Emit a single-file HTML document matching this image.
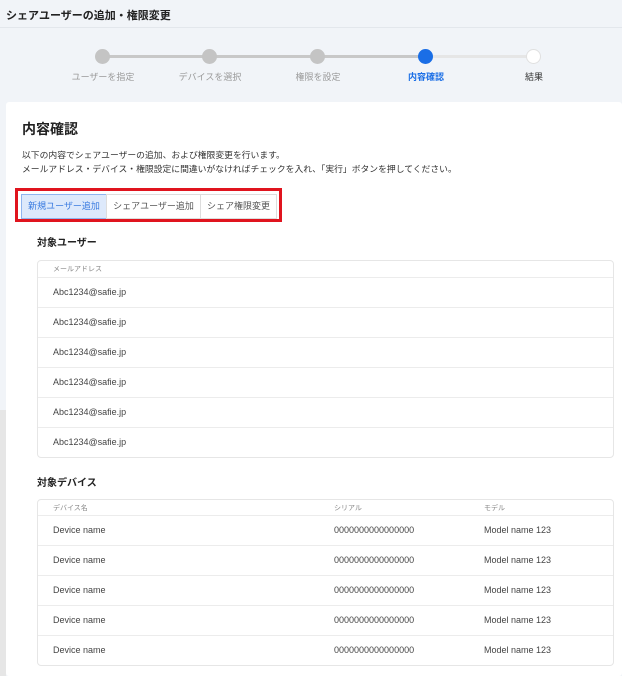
<!DOCTYPE html>
<html><head><meta charset="utf-8"><style>
*{margin:0;padding:0;box-sizing:border-box}
body{width:622px;height:676px;overflow:hidden;background:#f1f4f8;font-family:"Liberation Sans","Noto Sans CJK JP",sans-serif;color:#333;position:relative}
.hdr{position:absolute;left:0;top:0;width:622px;height:28px;border-bottom:1px solid #e3e7ec;font-size:11px;font-weight:bold;padding:7px 0 0 6px;color:#222}
.strip{position:absolute;left:0;top:410px;width:6px;height:266px;background:#e6e6e6}
.line{position:absolute;top:55px;height:3px}
.dot{position:absolute;top:49px;width:15px;height:15px;border-radius:50%}
.lbl{position:absolute;top:70px;font-size:9px;color:#999;width:100px;text-align:center}
.card{position:absolute;left:6px;top:102px;width:616px;height:574px;background:#fff;border-radius:3px}
.abs{position:absolute}
.tabs{position:absolute;left:15px;top:188px;width:267px;height:34px;border:3px solid #e0141e}
.tab{position:absolute;top:3px;height:25px;border:1px solid #ddd;font-size:9px;color:#555;text-align:center;line-height:23px;background:#fff;white-space:nowrap;overflow:hidden}
.tbl{position:absolute;left:37px;width:577px;border:1px solid #e6e6e6;border-radius:4px;font-size:9px;color:#444}
.row{position:absolute;left:0;width:575px;height:30px;border-top:1px solid #ececec}
.row span,.th span{position:absolute;top:9px}
.th{position:absolute;left:0;top:0;width:575px;height:15px;font-size:7px;color:#888}
.th span{top:3px}
</style></head><body>
<div class="hdr">シェアユーザーの追加・権限変更</div>
<div class="strip"></div>
<div class="line" style="left:103px;width:323px;background:#c8c8c8"></div>
<div class="line" style="left:426px;width:108px;background:#e6e6e6"></div>
<div class="dot" style="left:95px;background:#c4c4c4"></div>
<div class="dot" style="left:202px;background:#c4c4c4"></div>
<div class="dot" style="left:310px;background:#c4c4c4"></div>
<div class="dot" style="left:418px;background:#1a6ee6"></div>
<div class="dot" style="left:526px;background:#fff;border:1px solid #e0e0e0"></div>
<div class="lbl" style="left:53px">ユーザーを指定</div>
<div class="lbl" style="left:160px">デバイスを選択</div>
<div class="lbl" style="left:268px">権限を設定</div>
<div class="lbl" style="left:376px;color:#1a6ee6;font-weight:bold">内容確認</div>
<div class="lbl" style="left:484px;color:#333">結果</div>
<div class="card"></div>
<div class="abs" style="left:22px;top:119px;font-size:14px;font-weight:bold;color:#222">内容確認</div>
<div class="abs" style="left:22px;top:148px;font-size:8.8px;line-height:14px;color:#333;white-space:nowrap">以下の内容でシェアユーザーの追加、および権限変更を行います。<br>メールアドレス・デバイス・権限設定に間違いがなければチェックを入れ、「実行」ボタンを押してください。</div>
<div class="tabs">
<div class="tab" style="left:3px;width:86px;background:#dde9fb;border-color:#8fb5ef;color:#3a7be0">新規ユーザー追加</div>
<div class="tab" style="left:88px;width:95px">シェアユーザー追加</div>
<div class="tab" style="left:182px;width:77px">シェア権限変更</div>
</div>
<div class="abs" style="left:37px;top:234px;font-size:10px;font-weight:bold;color:#222">対象ユーザー</div>
<div class="tbl" style="top:260px;height:198px">
<div class="th"><span style="left:15px">メールアドレス</span></div>
<div class="row" style="top:16px"><span style="left:15px">Abc1234@safie.jp</span></div>
<div class="row" style="top:46px"><span style="left:15px">Abc1234@safie.jp</span></div>
<div class="row" style="top:76px"><span style="left:15px">Abc1234@safie.jp</span></div>
<div class="row" style="top:106px"><span style="left:15px">Abc1234@safie.jp</span></div>
<div class="row" style="top:136px"><span style="left:15px">Abc1234@safie.jp</span></div>
<div class="row" style="top:166px"><span style="left:15px">Abc1234@safie.jp</span></div>
</div>
<div class="abs" style="left:37px;top:474px;font-size:10px;font-weight:bold;color:#222">対象デバイス</div>
<div class="tbl" style="top:499px;height:167px">
<div class="th"><span style="left:15px">デバイス名</span><span style="left:296px">シリアル</span><span style="left:446px">モデル</span></div>
<div class="row" style="top:15px"><span style="left:15px">Device name</span><span style="left:296px">0000000000000000</span><span style="left:446px">Model name 123</span></div>
<div class="row" style="top:45px"><span style="left:15px">Device name</span><span style="left:296px">0000000000000000</span><span style="left:446px">Model name 123</span></div>
<div class="row" style="top:75px"><span style="left:15px">Device name</span><span style="left:296px">0000000000000000</span><span style="left:446px">Model name 123</span></div>
<div class="row" style="top:105px"><span style="left:15px">Device name</span><span style="left:296px">0000000000000000</span><span style="left:446px">Model name 123</span></div>
<div class="row" style="top:135px"><span style="left:15px">Device name</span><span style="left:296px">0000000000000000</span><span style="left:446px">Model name 123</span></div>
</div>
</body></html>
